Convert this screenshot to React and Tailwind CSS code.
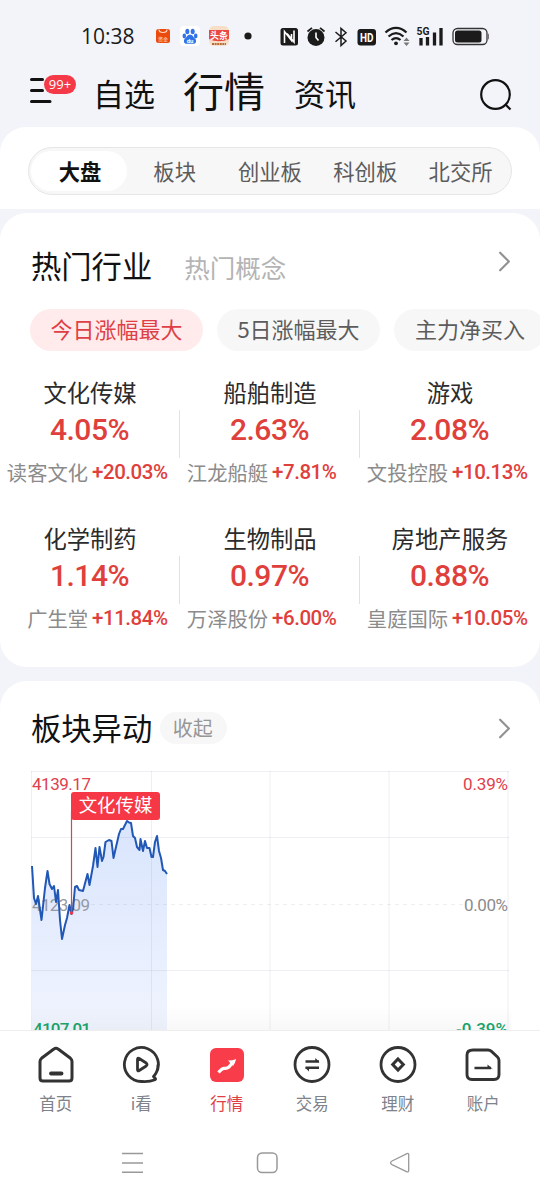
import { ChevronRight } from "lucide-react";

const tabs = ["大盘", "板块", "创业板", "科创板", "北交所"];

const filters = ["今日涨幅最大", "5日涨幅最大", "主力净买入"];

const industries = [
  { name: "文化传媒", change: "4.05%", stock: "读客文化", stockChange: "+20.03%" },
  { name: "船舶制造", change: "2.63%", stock: "江龙船艇", stockChange: "+7.81%" },
  { name: "游戏", change: "2.08%", stock: "文投控股", stockChange: "+10.13%" },
  { name: "化学制药", change: "1.14%", stock: "广生堂", stockChange: "+11.84%" },
  { name: "生物制品", change: "0.97%", stock: "万泽股份", stockChange: "+6.00%" },
  { name: "房地产服务", change: "0.88%", stock: "皇庭国际", stockChange: "+10.05%" },
];

const indexPoints = [
  [1, 95], [3, 127], [5, 133], [7, 125], [10.5, 149], [14, 117], [16.5, 100], [18.5, 113],
  [21, 118], [23, 115], [25, 131], [27, 119], [29, 149], [31, 168], [34, 154], [36, 147],
  [38.5, 134], [40.5, 143], [42, 138], [44, 116], [46, 115], [48, 119], [52, 120], [56.5, 103],
  [58.5, 114], [62, 95], [64.5, 77], [66.5, 96], [68.5, 76], [71, 90], [72.5, 86], [74.5, 71],
  [78, 69], [80.5, 70], [82.5, 87], [85, 76], [88, 63], [90, 58], [92, 58], [96, 50],
  [98, 51.5], [100, 52], [102, 65], [104, 67], [106, 76], [108.5, 79], [109.5, 68], [112, 80],
  [114, 70], [116, 77], [118.5, 77], [120.5, 86], [122, 86], [124, 71], [126, 65], [128, 80],
  [130, 87], [132, 99], [134, 100], [136, 103],
];

function StatusBar() {
  return (
    <div className="flex h-[60px] items-end pb-2 pl-[81px] pr-[49px] text-[#1b1b1b]">
      <span className="w-[74px] font-['Open_Sans','Noto_Sans',sans-serif] text-[21px] leading-8">10:38</span>
      <svg className="mb-[2px] h-7 w-[334px] shrink-0" viewBox="155 22 334 28" fill="none">
        <rect x="156" y="29" width="14" height="14" rx="2.500" fill="#ec4a0c" />
        <path d="M159 29.500c0 4 8 4 8 0" stroke="#ffd9c5" strokeWidth="1.200" />
        <text x="163" y="40.500" fontSize="5" fill="#ffe4d6" textAnchor="middle" fontFamily="Noto Sans CJK SC">资金</text>
        <rect x="180" y="26" width="20" height="20" rx="4" fill="#fff" />
        <g fill="#3274e8">
          <ellipse cx="187.300" cy="31.500" rx="2" ry="2.800" />
          <ellipse cx="192.700" cy="31.500" rx="2" ry="2.800" />
          <ellipse cx="184.300" cy="36" rx="1.800" ry="2.400" />
          <ellipse cx="195.700" cy="36" rx="1.800" ry="2.400" />
          <path d="M190 34.500c2.500 0 3 2.300 4.700 3.700 2.500 2.200 1.500 5.800-1.700 5.600-2-.2-4-.2-6 0-3.200.2-4.200-3.400-1.700-5.600 1.700-1.400 2.200-3.700 4.700-3.700Z" />
        </g>
        <text x="190" y="42.500" fontSize="6" fontWeight="700" fill="#fff" textAnchor="middle" fontFamily="Roboto">du</text>
        <rect x="209" y="26" width="20" height="20" rx="5" fill="#f6dfc6" />
        <path d="M209 30h20v9c-6 3-14 3-20 0Z" fill="#e94942" />
        <text x="219" y="39" fontSize="9" fontWeight="700" fill="#fff" textAnchor="middle" fontFamily="Noto Sans CJK SC">头条</text>
        <path d="M212 44h14" stroke="#b66b3c" strokeWidth="2" strokeDasharray="2 .6" />
        <circle cx="248" cy="36" r="3.600" fill="#1b1b1b" />

        <rect x="280.500" y="28" width="17.500" height="17.500" rx="2.500" fill="#1b1b1b" />
        <path d="M284.500 43V31.500l7 9V34M294 30.500V42l-7-8.500" stroke="#fff" strokeWidth="1.600" />
        <circle cx="316" cy="37.500" r="8.500" fill="#1b1b1b" />
        <path d="M307.500 31.500l4.500-3.700M320 27.800l4.500 3.700" stroke="#1b1b1b" strokeWidth="1.700" />
        <path d="M316 32.500v5l2.500 3" stroke="#fff" strokeWidth="1.600" />
        <path d="M335.500 32l10.500 9-5 4.500v-17l5 4.300-10.500 9" stroke="#1b1b1b" strokeWidth="1.500" />
        <rect x="357.500" y="29" width="18.500" height="16.500" rx="3" fill="#1b1b1b" />
        <text x="360" y="41.700" fontSize="12.500" fontWeight="700" fill="#fff" textLength="13.500" lengthAdjust="spacingAndGlyphs" fontFamily="Roboto">HD</text>
        <g stroke="#1b1b1b" strokeWidth="2.200">
          <path d="M385.500 32.500c6.500-6.300 14.500-6.300 21 0M388.500 36.500c5-4.400 10-4.400 15 0M391.500 40c3-2.600 6-2.600 9 0" />
        </g>
        <circle cx="396" cy="43.300" r="1.900" fill="#1b1b1b" />
        <path d="M403.500 41l3-3.500 3 3.500ZM403.500 42.500l3 3.500 3-3.500Z" fill="#777" />
        <path d="M421 38v7.500M427.500 37v8.500M434.500 32.500v13M441 28v17.500" stroke="#1b1b1b" strokeWidth="3.300" />
        <text x="416.500" y="35" fontSize="11.500" fontWeight="700" fill="#1b1b1b" textLength="13" lengthAdjust="spacingAndGlyphs" fontFamily="Roboto">5G</text>
        <rect x="453" y="28.500" width="34" height="16" rx="4.500" stroke="#333" strokeWidth="1.300" />
        <rect x="455" y="30.500" width="26.500" height="12" rx="2.500" fill="#1b1b1b" />
        <path d="M488 33.500c2.500 1 2.500 5 0 6Z" fill="#777" />
      </svg>
    </div>
  );
}

function Header() {
  return (
    <header className="flex h-[68px] items-center pl-[29px] pr-[27px] text-[#111]">
      <div className="relative h-9 w-[64px]">
        <svg className="h-9 w-7" viewBox="0 0 28 36" fill="none" stroke="#111" strokeWidth="3" strokeLinecap="round">
          <path d="M2.500 4.500h11M2.500 15.500h11M2.500 26.500h18.500" />
        </svg>
        <span className="absolute left-[15px] top-0 flex h-[19px] w-8 items-center justify-center rounded-full bg-[#f43a48] font-['Open_Sans','Noto_Sans',sans-serif] text-[13px] font-medium text-white">99+</span>
      </div>
      <span className="-mt-px w-[90px] text-[31px] leading-10">自选</span>
      <span className="-mt-[9px] w-[111px] whitespace-nowrap text-[41px] leading-[44px]">行情</span>
      <span className="-mt-px text-[31px] leading-10">资讯</span>
      <svg className="ml-auto mt-[3px] h-[34px] w-[34px]" viewBox="0 0 34 34" fill="none" stroke="#111" strokeWidth="2.200">
        <circle cx="16.500" cy="16.500" r="14.300" />
        <path d="M26.500 26.500l5 5" />
      </svg>
    </header>
  );
}

function MarketTabs() {
  return (
    <div className="h-[82px] shrink-0 rounded-t-[26px] bg-white px-7 pt-5">
      <div className="flex h-12 items-center rounded-full border border-[#e6e6e6] bg-[#f7f7f7] p-[2px] text-[21.300px] text-[#5c5c5c]">
        {tabs.map((tab, i) => (
          <div
            key={tab}
            className={
              i === 0
                ? "flex h-10 w-[96px] items-center justify-center rounded-full bg-white pl-[2px] font-bold text-[#111]"
                : "flex w-[95.300px] items-center justify-center whitespace-nowrap"
            }
          >
            {tab}
          </div>
        ))}
      </div>
    </div>
  );
}

function IndustryCell({ item, divider }) {
  return (
    <div className="relative h-[146px] whitespace-nowrap text-center">
      <div className="-mt-px text-[23.300px] leading-9 text-[#2b2b2b]">{item.name}</div>
      <div className="mt-[2px] pr-px font-[Roboto,sans-serif] text-[30px] font-medium leading-9 tracking-[-0.500px] text-[#df403c]">{item.change}</div>
      <div className="mt-[6px] flex items-center gap-1 leading-9">
        <span className="w-[88px] text-right text-[20.300px] text-[#8b8b8b]">{item.stock}</span>
        <span className="font-[Roboto,sans-serif] text-[20.500px] font-medium tracking-[-0.450px] text-[#df403c]">{item.stockChange}</span>
      </div>
      {divider && <div className="absolute right-0 top-[35px] h-12 w-px bg-[#e2e2e2]" />}
    </div>
  );
}

function HotIndustries() {
  return (
    <section className="mt-1 h-[454px] shrink-0 rounded-[27px] bg-white">
      <div className="flex h-[96px] items-center pl-[31px] pr-[18px] pt-[9px]">
        <h2 className="text-[30.300px] text-[#111]">热门行业</h2>
        <span className="ml-[32px] mt-1 text-[25.500px] text-[#b4b4b4]">热门概念</span>
        <ChevronRight className="-mt-[9px] ml-auto size-[35px]" color="#929292" strokeWidth={1.5} absoluteStrokeWidth />
      </div>
      <div className="flex gap-[14px] overflow-hidden pl-[30px] text-[22px]">
        {filters.map((filter, i) => (
          <button
            key={filter}
            className={
              i === 0
                ? "h-[42px] w-[173px] shrink-0 rounded-full bg-[#ffebeb] pb-[3px] text-[#df3f46]"
                : i === 1
                  ? "h-[42px] w-[163px] shrink-0 rounded-full bg-[#f7f7f7] pb-[3px] text-[#5c5c5c]"
                  : "h-[42px] w-[152px] shrink-0 rounded-full bg-[#f7f7f7] pb-[3px] text-[#5c5c5c]"
            }
          >
            {filter}
          </button>
        ))}
      </div>
      <div className="mt-6 grid grid-cols-3">
        {industries.map((item, i) => (
          <IndustryCell key={item.name} item={item} divider={i % 3 !== 2} />
        ))}
      </div>
    </section>
  );
}

function IndexChart() {
  const line = indexPoints.map((p) => p.join(",")).join(" ");

  return (
    <svg className="ml-[31px] h-[259px] w-[480px]" viewBox="0 0 480 259" fontFamily="Roboto, sans-serif" fontSize="17">
      <defs>
        <linearGradient id="area" x1="0" y1="50" x2="0" y2="259" gradientUnits="userSpaceOnUse">
          <stop offset="0" stopColor="#d9e5fd" />
          <stop offset="1" stopColor="#f0f4fe" />
        </linearGradient>
        <linearGradient id="fade" x1="0" y1="0" x2="0" y2="1">
          <stop offset="0" stopColor="#888" stopOpacity="0" />
          <stop offset="1" stopColor="#888" stopOpacity=".06" />
        </linearGradient>
      </defs>
      <polygon points={`1,259 ${line} 136,259`} fill="url(#area)" />
      <g stroke="#8790a0" strokeOpacity=".14">
        <path d="M0 .5h478M0 66.500h478M0 199.500h478" />
        <path d="M.5 0v259M120.500 0v259M239 0v259M358 0v259M477 0v259" />
        <path d="M60 133.500h372" strokeDasharray="4 4" />
      </g>
      <text x="1" y="18.500" fill="#df404c" textLength="59">4139.17</text>
      <text x="477" y="18.500" fill="#df404c" textAnchor="end" textLength="45">0.39%</text>
      <text x="1" y="140" fill="#9699a1" textLength="58">4123.09</text>
      <text x="477" y="140" fill="#8b8b8b" textAnchor="end" textLength="44">0.00%</text>
      <text x="2" y="263.500" fill="#13a267" fontWeight="500" textLength="58">4107.01</text>
      <text x="477" y="263.500" fill="#13a267" fontWeight="500" textAnchor="end" textLength="52">-0.39%</text>
      <polyline points={line} fill="none" stroke="#2157b5" strokeWidth="2" strokeLinejoin="round" />
      <path d="M40.500 40v102" stroke="#c84b59" strokeWidth="1.200" />
      <circle cx="40.500" cy="142" r="1.800" fill="#e8394c" />
      <rect x="40" y="21" width="89" height="28" rx="3" fill="#f63846" />
      <text x="84.500" y="41" fill="#fff" fontFamily="'Noto Sans CJK SC', sans-serif" fontSize="18.400" textAnchor="middle">文化传媒</text>
      <rect y="235" width="480" height="24" fill="url(#fade)" />
    </svg>
  );
}

function SectorMoves() {
  return (
    <section className="mt-[14px] h-[349px] shrink-0 overflow-hidden rounded-t-[27px] bg-white">
      <div className="flex h-[90px] items-center pl-[31px] pr-[18px] pt-[4px]">
        <h2 className="text-[30.300px] text-[#111]">板块异动</h2>
        <span className="ml-2 flex h-8 w-[67px] items-center justify-center rounded-full bg-[#f7f7f7] pr-[2px] text-[20px] text-[#969696]">收起</span>
        <ChevronRight className="ml-auto size-[35px]" color="#929292" strokeWidth={1.5} absoluteStrokeWidth />
      </div>
      <IndexChart />
    </section>
  );
}

const navItems = [
  {
    label: "首页",
    icon: (
      <>
        <path d="M3 16.500Q3 14.500 4.500 13.300L16.500 4.300Q19 2.300 21.500 4.300L33.500 13.300Q35 14.500 35 16.500V33Q35 36 32 36H6Q3 36 3 33Z" strokeWidth="3" />
        <path d="M14 28.500h10.500" strokeWidth="3.800" strokeLinecap="round" />
      </>
    ),
  },
  {
    label: "i看",
    icon: (
      <>
        <path d="M33.500 29A17 17 0 1 0 20 36.500C25 36.800 30 36 33 34.800Q34 34.300 33.300 33.500L31.500 31.500Q36 27 36 19.500" strokeWidth="2.800" />
        <path d="M15.500 14.500v10q0 2 1.700 1l7-4.500q1.700-1.500 0-3l-7-4.500q-1.700-1-1.700 1Z" strokeWidth="2.800" />
      </>
    ),
  },
  {
    label: "行情",
    active: true,
    icon: (
      <>
        <rect x="2" y="3" width="34" height="34" rx="6" fill="#f93c49" stroke="none" />
        <path d="M10.500 27.500q3.500-4.500 6-4.200t4.500-1.300l4.500-5.500" stroke="#fff" strokeWidth="3.200" />
        <path d="M20 15.500q4 .2 8.200-1.500-1 4-3.200 7Z" fill="#fff" stroke="none" />
      </>
    ),
  },
  {
    label: "交易",
    icon: (
      <>
        <circle cx="19" cy="19.500" r="17" strokeWidth="2.800" />
        <path d="M12.500 16.500h13.500M12.500 22.700h13.500" strokeWidth="2.500" />
        <path d="M22 16l.5-3 4 4.500ZM16 23.500v3l-4-4Z" fill="#333" stroke="none" />
      </>
    ),
  },
  {
    label: "理财",
    icon: (
      <>
        <circle cx="19" cy="19.500" r="17" strokeWidth="2.800" />
        <path d="M19 14l5.300 5.500L19 25l-5.300-5.500Z" strokeWidth="3" strokeLinejoin="miter" />
      </>
    ),
  },
  {
    label: "账户",
    icon: (
      <>
        <path d="M9 5h15q2 0 3.500 1.400l6 5.600q1.500 1.500 1.500 3.500V29.500q0 5-5 5H8Q3 34.500 3 29.500V10Q3 5 9 5Z" strokeWidth="2.900" />
        <path d="M10.500 23h16.500" strokeWidth="2.500" />
        <path d="M23.500 22v-2.500l5.500 4.700Z" fill="#333" stroke="none" />
      </>
    ),
  },
];

function BottomNav() {
  return (
    <footer className="h-[170px] shrink-0 border-t border-[#eeeeee] bg-white">
      <nav className="flex pl-[13px] pr-[14px] pt-[14px]">
        {navItems.map((item) => (
          <div key={item.label} className="flex flex-1 flex-col items-center">
            <svg className="h-[39px] w-[38px]" viewBox="0 0 38 39" fill="none" stroke="#333" strokeLinejoin="round">
              {item.icon}
            </svg>
            <span className={item.active ? "mt-[7px] text-[16.500px] leading-6 text-[#df3f46]" : "mt-[7px] text-[16.500px] leading-6 text-[#7d828b]"}>
              {item.label}
            </span>
          </div>
        ))}
      </nav>
      <div className="mt-[37px] flex items-center justify-between pl-[122px] pr-[129px]">
        <svg className="h-[22px] w-[22px]" viewBox="0 0 22 22" stroke="#999" strokeWidth="1.500">
          <path d="M0 1.500h21M0 11h21M0 20.300h21" />
        </svg>
        <svg className="h-[22px] w-[22px]" viewBox="0 0 22 22" fill="none" stroke="#999" strokeWidth="1.500">
          <rect x="1.500" y="1" width="19.500" height="19.500" rx="4.500" />
        </svg>
        <svg className="h-[22px] w-[22px]" viewBox="0 0 22 22" fill="none" stroke="#999" strokeWidth="1.300">
          <path d="M18 1.600L3 9q-3 1.800 0 3.600l15 7.200q1.700.6 1.700-1.200V2.800q0-1.800-1.700-1.200Z" />
        </svg>
      </div>
    </footer>
  );
}

export default function App() {
  return (
    <div className="flex h-[1200px] w-[540px] flex-col overflow-hidden bg-[#f3f4f9] font-['Noto_Sans_CJK_SC',sans-serif]">
      <StatusBar />
      <Header />
      <MarketTabs />
      <HotIndustries />
      <SectorMoves />
      <BottomNav />
    </div>
  );
}
